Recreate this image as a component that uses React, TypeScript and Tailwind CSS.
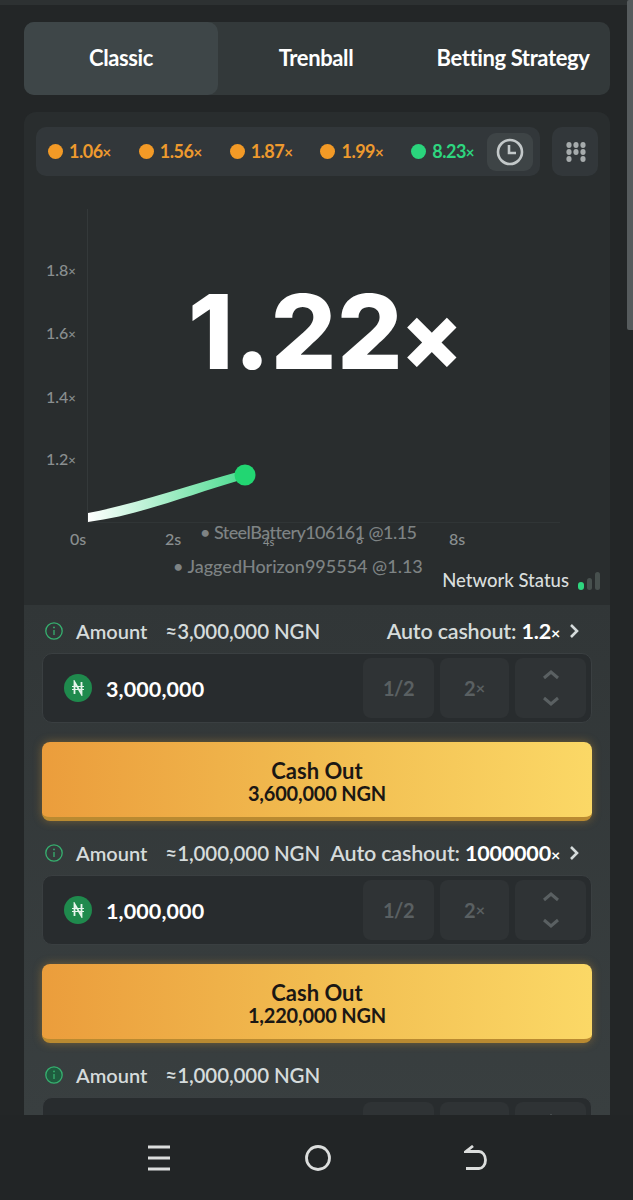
import React from "react";

const font = { fontFamily: '"Lato","Open Sans",sans-serif' };

function Hist({ v, green }: { v: string; green?: boolean }) {
  return (
    <div className={`flex items-center gap-[6px] text-[18px] font-bold tracking-[-0.5px] ${green ? "text-[#2ed67f]" : "text-[#ee9a2e]"}`}>
      <span className={`w-[15px] h-[15px] rounded-full ${green ? "bg-[#2ad47c]" : "bg-[#f39a26]"}`} />
      <span>{v}<span className="text-[15px]">×</span></span>
    </div>
  );
}

function Info({ dim }: { dim?: boolean }) {
  return (
    <svg width="20" height="20" viewBox="0 0 20 20" fill="none" className="shrink-0">
      <circle cx="10" cy="10" r="8.2" stroke="#36b06f" strokeWidth="1.3" fill={dim ? "#1f5c3f" : "none"} />
      <path d="M10 9v5" stroke="#36b06f" strokeWidth="1.3" />
      <circle cx="10" cy="6.4" r="0.9" fill="#36b06f" />
    </svg>
  );
}

function Naira() {
  return (
    <span className="w-[28px] h-[28px] rounded-full bg-[#1f8a4d] flex items-center justify-center shrink-0">
      <svg width="16" height="16" viewBox="0 0 16 16" fill="none" stroke="#e6f5ec" strokeWidth="1.8">
        <path d="M4.5 14V2l7 12V2" />
        <path d="M2 6.5h12M2 9.5h12" strokeWidth="1.2" />
      </svg>
    </span>
  );
}

function Chevrons() {
  return (
    <svg width="20" height="42" viewBox="0 0 20 42" fill="none" stroke="#5a6062" strokeWidth="3">
      <path d="M3 11l7-6 7 6" />
      <path d="M3 31l7 6 7-6" />
    </svg>
  );
}

function Bet({ amount, val, auto, pay }: { amount: string; val: string; auto?: string; pay?: string }) {
  return (
    <div className="flex flex-col">
      <div className="h-[22px] flex items-center text-[20px] font-semibold text-[#d5dbdb] pl-[2px] pr-[12px] whitespace-nowrap">
        <Info dim={!pay} />
        <span className="ml-[12px]">Amount</span>
        <span className="ml-[18px] text-[20.5px] tracking-[-0.1px]">≈{val} NGN</span>
        {auto && (
          <span className="ml-auto flex items-center gap-[8px] text-[21.5px] tracking-[-0.2px]">
            <span>Auto cashout: <span className="font-bold text-white">{auto}<span className="text-[16px]">×</span></span></span>
            <svg width="12" height="16" viewBox="0 0 12 16" fill="none" stroke="#d5dbdb" strokeWidth="2.6"><path d="M3 2l6 6-6 6" /></svg>
          </span>
        )}
      </div>
      <div className="mt-[11px] h-[70px] shrink-0 rounded-[10px] bg-[#282c2e] border border-[#3a3f41] flex items-center pl-[21px] pr-[5px]">
        <Naira />
        <span className="ml-[14px] pt-[3px] text-[21.5px] font-bold text-white tracking-[0.1px]">{amount}</span>
        <div className="ml-auto flex gap-[6px] text-[20px] font-bold text-[#5a6062]">
          <span className="w-[71px] h-[60px] rounded-[8px] bg-[#2f3335] flex items-center justify-center tracking-[-0.5px]">1/2</span>
          <span className="w-[69px] h-[60px] rounded-[8px] bg-[#2f3335] flex items-center justify-center">2<span className="text-[16px]">×</span></span>
          <span className="w-[71px] h-[60px] rounded-[8px] bg-[#2f3335] flex items-center justify-center"><Chevrons /></span>
        </div>
      </div>
      {pay && (
        <div className="mt-[19px] h-[79px] shrink-0 rounded-[8px] bg-gradient-to-r from-[#eb9d3c] via-[#f1bc50] to-[#fbd866] border-b-[4px] border-[#b98a31] shadow-[0_0_10px_rgba(240,170,50,0.35)] flex flex-col items-center justify-center pt-[5px] text-[#1b1714] font-bold leading-[22px]">
          <span className="text-[22px]">Cash Out</span>
          <span className="text-[20px] tracking-[-0.2px]">{pay} NGN</span>
        </div>
      )}
    </div>
  );
}

export default function App() {
  return (
    <div style={font} className="w-[633px] h-[1200px] overflow-hidden bg-[#232627] flex flex-col relative">
      <div className="absolute right-0 top-0 w-[6px] h-[330px] bg-[#565b5d] rounded-l-[2px]" />
      <div className="h-[5px] bg-[#2d3132] shrink-0" />
      <div className="flex-1 min-h-0 flex flex-col pl-[24px] pr-[23px] pt-[17px]">
        <div className="h-[73px] shrink-0 rounded-[10px] bg-[#33393a] flex items-center text-white text-[22px] font-bold tracking-[-0.4px] pb-0">
          <div className="w-[194px] h-full rounded-[10px] bg-[#3e4648] flex items-center justify-center pb-[2px]">Classic</div>
          <div className="w-[196px] text-center pb-[2px]">Trenball</div>
          <div className="flex-1 text-center pl-[2px] pb-[2px] whitespace-nowrap">Betting Strategy</div>
        </div>

        <div className="mt-[17px] h-[493px] shrink-0 rounded-t-[12px] bg-[#292d2e] flex flex-col pt-[15px] px-[12px]">
          <div className="flex gap-[12px] h-[49px] shrink-0">
            <div className="w-[505px] rounded-[10px] bg-[#32373a] flex items-center pl-[12px] pr-[7px]">
              <div className="flex-1 flex items-center justify-between pr-[13px]">
                <Hist v="1.06" />
                <Hist v="1.56" />
                <Hist v="1.87" />
                <Hist v="1.99" />
                <Hist v="8.23" green />
              </div>
              <div className="w-[46px] h-[38px] rounded-[9px] bg-[#3e4446] flex items-center justify-center">
                <svg width="28" height="28" viewBox="0 0 28 28" fill="none" stroke="#c3c8c9" strokeWidth="2.6">
                  <circle cx="14" cy="14" r="12" />
                  <path d="M13 7v8h7" />
                </svg>
              </div>
            </div>
            <div className="w-[46px] rounded-[10px] bg-[#32373a] flex items-center justify-center pl-[1px]">
              <svg width="20" height="20" viewBox="0 0 20 20" fill="#a6abac">
                <ellipse cx="3" cy="3" rx="2.6" ry="3" /><ellipse cx="10" cy="3" rx="2.6" ry="3" /><ellipse cx="17" cy="3" rx="2.6" ry="3" />
                <ellipse cx="3" cy="10" rx="2.6" ry="3" /><ellipse cx="10" cy="10" rx="2.6" ry="3" /><ellipse cx="17" cy="10" rx="2.6" ry="3" />
                <ellipse cx="3" cy="17" rx="2.6" ry="3" /><ellipse cx="17" cy="17" rx="2.6" ry="3" />
              </svg>
            </div>
          </div>

          <div className="relative flex-1 min-h-0 text-[#8a8f90] text-[16px] font-medium">
            <svg className="absolute left-0 top-0" width="562" height="429" viewBox="0 0 562 429" fill="none">
              <defs>
                <linearGradient id="curve" x1="52" y1="0" x2="205" y2="0" gradientUnits="userSpaceOnUse">
                  <stop offset="0" stopColor="#ffffff" />
                  <stop offset="1" stopColor="#4fdc92" />
                </linearGradient>
              </defs>
              <path d="M51.5 33V346" stroke="#34393a" />
              <path d="M51 346.5H524" stroke="#303536" />
              <path d="M52 337C100 328 150 310 205 295L208 303C150 320 100 340 52 346Z" fill="url(#curve)" />
              <circle cx="209" cy="299" r="10.5" fill="#22d672" />
            </svg>
            <span className="absolute left-[10px] top-[82px]">1.8<span className="text-[13px]">×</span></span>
            <span className="absolute left-[10px] top-[145px]">1.6<span className="text-[13px]">×</span></span>
            <span className="absolute left-[10px] top-[209px]">1.4<span className="text-[13px]">×</span></span>
            <span className="absolute left-[10px] top-[271px]">1.2<span className="text-[13px]">×</span></span>
            <span className="absolute left-[34px] top-[351px]">0s</span>
            <span className="absolute left-[129px] top-[351px]">2s</span>
            <span className="absolute left-[227px] top-[358px] text-[11px]">4s</span>
            <span className="absolute left-[320px] top-[355px] text-[12px]">6</span>
            <span className="absolute left-[413px] top-[351px]">8s</span>
            <div className="absolute left-[152px] top-[96px] text-white font-extrabold text-[103px] leading-[120px] tracking-[0.5px] whitespace-nowrap" style={{ fontFamily: '"Inter","Lato",sans-serif' }}>
              1.22<span className="text-[92px] ml-[-3px]">×</span>
            </div>
            <span className="absolute left-[164px] top-[343px] text-[#7e8384] text-[18px] tracking-[-0.55px] whitespace-nowrap">• SteelBattery106161 @1.15</span>
            <span className="absolute left-[137px] top-[377px] text-[#7e8384] text-[18px] whitespace-nowrap">• JaggedHorizon995554 @1.13</span>
            <div className="absolute right-[-2px] top-[391px] flex items-center gap-[9px] text-[#d9dedd] text-[18.5px] font-medium whitespace-nowrap">
              <span>Network Status</span>
              <span className="flex items-end gap-[3px] h-[18px]">
                <span className="w-[6px] h-[8px] rounded-full bg-[#2ed67f]" />
                <span className="w-[5px] h-[12px] rounded-full bg-[#47504e]" />
                <span className="w-[5px] h-[18px] rounded-full bg-[#47504e]" />
              </span>
            </div>
          </div>
        </div>

        <div className="h-[510px] shrink-0 overflow-hidden bg-gradient-to-b from-[#313637] to-[#393f40] px-[18px] pt-[15px] flex flex-col gap-[21px]">
          <Bet amount="3,000,000" val="3,000,000" auto="1.2" pay="3,600,000" />
          <Bet amount="1,000,000" val="1,000,000" auto="1000000" pay="1,220,000" />
          <Bet amount="" val="1,000,000" />
        </div>
      </div>

      <div className="h-[85px] shrink-0 bg-[#222526] flex items-center justify-between pl-[147px] pr-[145px]">
        <svg width="24" height="26" viewBox="0 0 24 26" fill="none" stroke="#dcdedd" strokeWidth="2.8">
          <path d="M1 2h22M1 13h22M1 24h22" />
        </svg>
        <svg width="26" height="26" viewBox="0 0 26 26" fill="none" stroke="#dcdedd" strokeWidth="2.8">
          <circle cx="13" cy="13" r="11.5" />
        </svg>
        <svg width="24" height="26" viewBox="0 0 24 26" fill="none" stroke="#dcdedd" strokeWidth="2.8">
          <path d="M9 1L2 6.5h13a6.5 8.5 0 0 1 0 17H2" />
        </svg>
      </div>
    </div>
  );
}
